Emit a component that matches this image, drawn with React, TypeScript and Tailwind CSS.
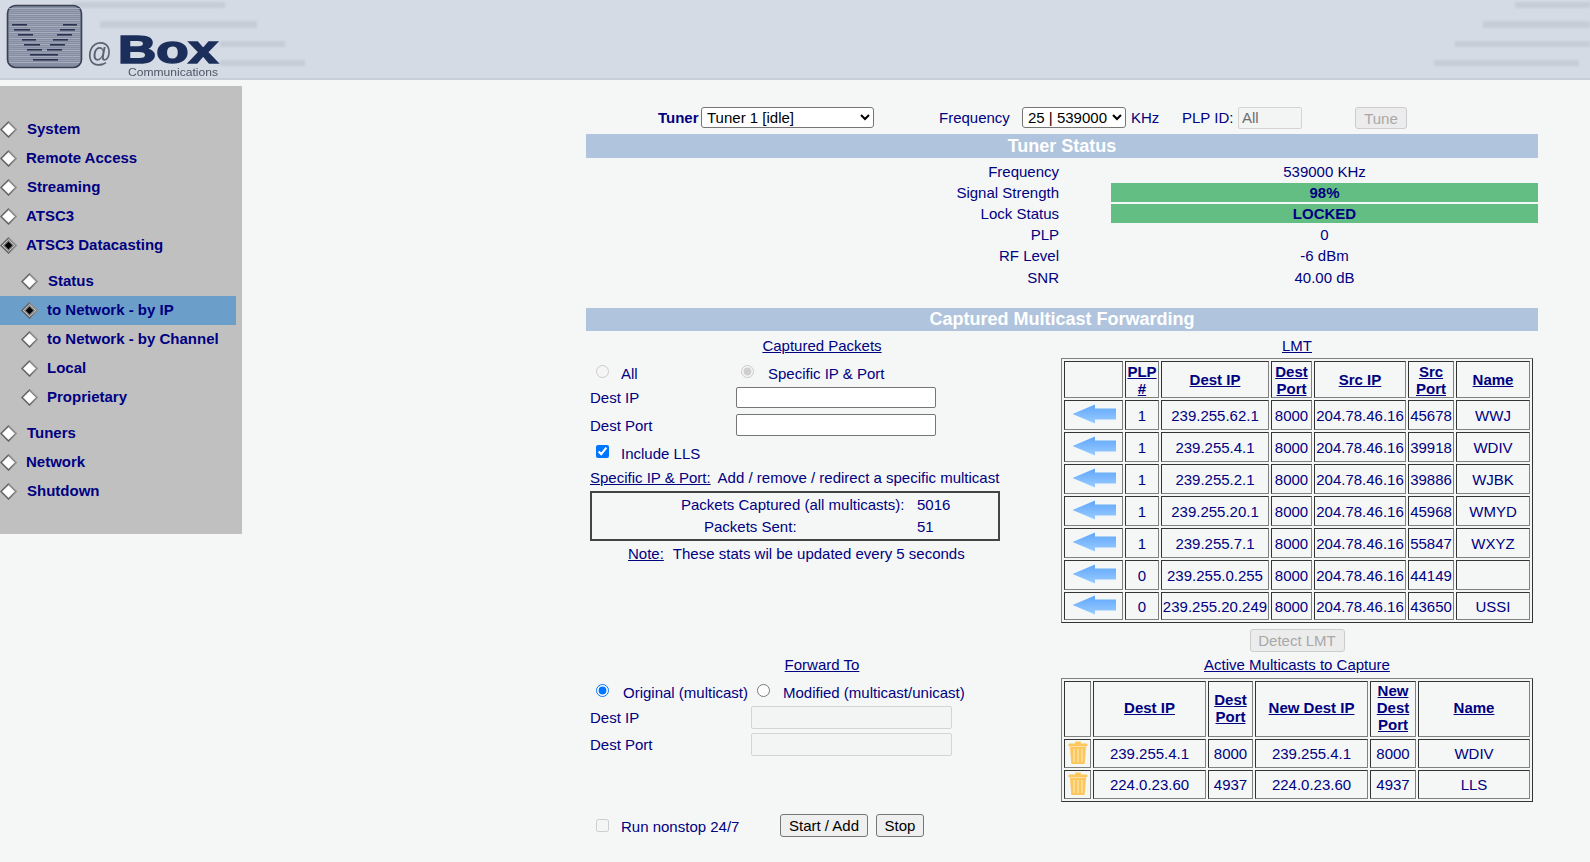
import React from "react";

const Diamond = ({ on = false }: { on?: boolean }) => (
  <svg width="17" height="17" viewBox="0 0 18 18" className="shrink-0">
    <polygon points="9,0 18,9 9,18 0,9" fill="#5f5f5f" />
    <polygon points="9,0 18,9 9,18 16.5,9 9,1.5" fill="#9a9a9a" />
    <polygon points="9,2 16,9 9,16 2,9" fill="#e2e2e2" />
    <polygon points="9,3 15,9 9,15 3,9" fill={on ? "#7a7a7a" : "#ffffff"} />
    {on && <polygon points="9,5 13,9 9,13 5,9" fill="#000000" />}
  </svg>
);

const Arrow = () => (
  <svg width="44" height="20" viewBox="0 0 44 20" className="block mx-auto mb-[2px]">
    <defs>
      <linearGradient id="ag" x1="0" x2="0" y1="0" y2="1">
        <stop offset="0" stopColor="#5ea6fb" />
        <stop offset="1" stopColor="#9accff" />
      </linearGradient>
      <filter id="ab" x="-5%" y="-10%" width="110%" height="120%">
        <feGaussianBlur stdDeviation="0.5" />
      </filter>
    </defs>
    <polygon points="0.5,10 23,0.5 23,4.5 44,4.5 44,15.5 23,15.5 23,19.5" fill="url(#ag)" filter="url(#ab)" />
  </svg>
);

const Trash = () => (
  <svg width="20" height="23" viewBox="0 0 20 23" className="block mx-auto mb-[2px]">
    <rect x="7" y="0.5" width="6" height="2.5" rx="1" fill="#fcc75c" />
    <rect x="0.5" y="2.5" width="19" height="3" rx="1" fill="#fcc75c" />
    <path d="M2 6h16l-1.2 16a1 1 0 0 1-1 1H4.2a1 1 0 0 1-1-1z" fill="#fcc75c" />
    <path d="M6 8v13M10 8v13M14 8v13" stroke="#fde6b0" strokeWidth="1.2" />
  </svg>
);

const stripes: number[][] = [
  [73, 2, 152, 6], [100, 21, 157, 7], [220, 41, 65, 6], [220, 60, 85, 6],
  [1515, 2, 75, 6], [1483, 21, 107, 7], [1455, 41, 135, 6], [1434, 60, 145, 6],
  [0, 79, 15, 1], [1427, 79, 120, 1],
];

const vDashes: number[][] = [
  [12, 24, 15], [63, 24, 14], [14, 29, 16], [60, 29, 15], [18, 34, 15], [57, 34, 15],
  [22, 39, 14], [53, 39, 15], [24, 44, 16], [50, 44, 15], [27, 49, 15], [47, 49, 15],
  [30, 54, 28], [33, 59, 25],
];

const Banner = () => (
  <svg width="1590" height="80" viewBox="0 0 1590 80" className="block">
    <defs>
      <filter id="b1" x="-5%" y="-50%" width="110%" height="200%">
        <feGaussianBlur stdDeviation="0.8" />
      </filter>
      <filter id="b2" x="-5%" y="-5%" width="110%" height="110%">
        <feGaussianBlur stdDeviation="0.4" />
      </filter>
    </defs>
    <rect width="1590" height="80" fill="#d4dbe5" />
    <g filter="url(#b1)" fill="#c6cdd8">
      {stripes.map(([x, y, w, h], i) => (
        <rect key={i} x={x} y={y} width={w} height={h} />
      ))}
    </g>
    <rect y="78" width="1590" height="2" fill="#c8cfd9" />
    <g filter="url(#b2)">
      <rect x="7.5" y="5.5" width="74" height="62" rx="8" fill="#858ea2" stroke="#3a4152" strokeWidth="1.6" />
      {Array.from({ length: 28 }).map((_, i) => (
        <rect key={i} x="9" y={8 + i * 2} width="71" height="0.8" fill={i % 3 === 0 ? "#b0b6c4" : "#9da4b5"} />
      ))}
      {vDashes.map(([x, y, w], i) => (
        <rect key={i} x={x} y={y} width={w} height="1.6" fill="#2a3350" />
      ))}
      <text x="87" y="62" fontFamily="'Liberation Sans', sans-serif" fontSize="27" fill="#5b6272" textLength="25" lengthAdjust="spacingAndGlyphs">@</text>
      <text x="118" y="63" fontFamily="'Liberation Sans', sans-serif" fontWeight="700" fontSize="38" fill="#1f2e5b" stroke="#1f2e5b" strokeWidth="1.6" textLength="100" lengthAdjust="spacingAndGlyphs">Box</text>
      <text x="128" y="76" fontFamily="'Liberation Sans', sans-serif" fontSize="11" fill="#4f5666" textLength="90" lengthAdjust="spacingAndGlyphs">Communications</text>
    </g>
  </svg>
);

const NavItem = ({ label, text, on = false, sub = false, active = false }: { label: string; text: string; on?: boolean; sub?: boolean; active?: boolean }) => (
  <div className={`flex items-center h-[29px] ${active ? "bg-[#6b9ec8] w-[236px]" : ""} ${sub ? "pl-[21px]" : "pl-0"}`}>
    <Diamond on={on} />
    <span className={`font-bold text-[15px] text-[#000080] whitespace-nowrap ${text}`}>{label}</span>
  </div>
);

const Sidebar = () => (
  <aside className="w-[242px] h-[448px] mt-[6px] bg-[#c0c0c0] pt-[29px] shrink-0">
    <NavItem label="System" text="ml-[10px]" />
    <NavItem label="Remote Access" text="ml-[9px]" />
    <NavItem label="Streaming" text="ml-[10px]" />
    <NavItem label="ATSC3" text="ml-[9px]" />
    <NavItem label="ATSC3 Datacasting" text="ml-[9px]" on />
    <div className="h-[7px]" />
    <NavItem label="Status" text="ml-[10px]" sub />
    <NavItem label="to Network - by IP" text="ml-[9px]" sub on active />
    <NavItem label="to Network - by Channel" text="ml-[9px]" sub />
    <NavItem label="Local" text="ml-[9px]" sub />
    <NavItem label="Proprietary" text="ml-[9px]" sub />
    <div className="h-[7px]" />
    <NavItem label="Tuners" text="ml-[10px]" />
    <NavItem label="Network" text="ml-[9px]" />
    <NavItem label="Shutdown" text="ml-[10px]" />
  </aside>
);

const StatusRow = ({ label, value, green = false, last = false }: { label: string; value: string; green?: boolean; last?: boolean }) => (
  <div className={`flex items-center ${last ? "h-[23px]" : "h-[21px]"}`}>
    <div className="w-[473px] text-right mt-[2px]">{label}</div>
    <div className={`ml-[52px] w-[427px] text-center ${green ? "bg-[#62be82] font-bold h-[19px] leading-[19px]" : "mt-[2px]"}`}>{value}</div>
  </div>
);

const Th = ({ children, lift = false }: { children: React.ReactNode; lift?: boolean }) => (
  <th className={`border border-t-[#333333] border-l-[#333333] border-b-[#808080] border-r-[#808080] p-0 text-center font-bold leading-[17px] overflow-hidden ${lift ? "pb-[3px]" : ""}`}>
    <span className="underline">{children}</span>
  </th>
);

const Td = ({ children }: { children?: React.ReactNode }) => (
  <td className="border border-t-[#333333] border-l-[#333333] border-b-[#808080] border-r-[#808080] p-0 text-center leading-[17px] whitespace-nowrap overflow-hidden">
    {children}
  </td>
);

const tableCls = "table-fixed w-[472px] border-separate border-spacing-[2px] border border-t-[#808080] border-l-[#808080] border-b-[#333333] border-r-[#333333]";

const lmt = [
  ["1", "239.255.62.1", "8000", "204.78.46.16", "45678", "WWJ"],
  ["1", "239.255.4.1", "8000", "204.78.46.16", "39918", "WDIV"],
  ["1", "239.255.2.1", "8000", "204.78.46.16", "39886", "WJBK"],
  ["1", "239.255.20.1", "8000", "204.78.46.16", "45968", "WMYD"],
  ["1", "239.255.7.1", "8000", "204.78.46.16", "55847", "WXYZ"],
  ["0", "239.255.0.255", "8000", "204.78.46.16", "44149", ""],
  ["0", "239.255.20.249", "8000", "204.78.46.16", "43650", "USSI"],
];

const active = [
  ["239.255.4.1", "8000", "239.255.4.1", "8000", "WDIV"],
  ["224.0.23.60", "4937", "224.0.23.60", "4937", "LLS"],
];

const LmtTable = () => (
  <table className={tableCls}>
    <colgroup>
      <col className="w-[59px]" /><col className="w-[34px]" /><col className="w-[108px]" /><col className="w-[41px]" /><col className="w-[92px]" /><col className="w-[46px]" /><col className="w-[74px]" />
    </colgroup>
    <thead>
      <tr className="h-[37px]">
        <Td />
        <Th>PLP<br />#</Th>
        <Th>Dest IP</Th>
        <Th>Dest<br />Port</Th>
        <Th>Src IP</Th>
        <Th>Src<br />Port</Th>
        <Th>Name</Th>
      </tr>
    </thead>
    <tbody>
      {lmt.map((r, i) => (
        <tr key={i} className={i === lmt.length - 1 ? "h-[28px]" : "h-[30px]"}>
          <Td><Arrow /></Td>
          {r.map((c, j) => <Td key={j}>{c}</Td>)}
        </tr>
      ))}
    </tbody>
  </table>
);

const ActiveTable = () => (
  <table className={tableCls}>
    <colgroup>
      <col className="w-[27px]" /><col className="w-[113px]" /><col className="w-[45px]" /><col className="w-[113px]" /><col className="w-[46px]" /><col className="w-[112px]" />
    </colgroup>
    <thead>
      <tr className="h-[56px]">
        <Td />
        <Th lift>Dest IP</Th>
        <Th lift>Dest<br />Port</Th>
        <Th lift>New Dest IP</Th>
        <Th lift>New<br />Dest<br />Port</Th>
        <Th lift>Name</Th>
      </tr>
    </thead>
    <tbody>
      {active.map((r, i) => (
        <tr key={i} className="h-[29px]">
          <Td><Trash /></Td>
          {r.map((c, j) => <Td key={j}>{c}</Td>)}
        </tr>
      ))}
    </tbody>
  </table>
);

const fieldCls = "border border-[#767676] rounded-[2px] bg-white";
const offCls = "h-full border border-[#d4d4d4] rounded-[2px] bg-[#f3f4f4]";

const Left = () => (
  <div className="w-[472px] shrink-0">
    <div className="h-[20px] mt-[5px] text-center leading-[20px]"><span className="underline">Captured Packets</span></div>
    <div className="h-[20px] mt-[7px] flex items-center pl-[10px]">
      <input type="radio" disabled name="cap" className="mb-[3px]" />
      <span className="ml-[12px] mt-[2px] w-[120px]">All</span>
      <input type="radio" disabled defaultChecked name="cap" className="mb-[3px]" />
      <span className="ml-[14px] mt-[2px]">Specific IP &amp; Port</span>
    </div>
    <div className="h-[22px] mt-[4px] flex items-start pl-[4px]">
      <span className="w-[146px] leading-[22px]">Dest IP</span>
      <input type="text" className={`w-[200px] h-[21px] ${fieldCls}`} />
    </div>
    <div className="h-[22px] mt-[5px] flex items-center pl-[4px]">
      <span className="w-[146px] mt-[2px]">Dest Port</span>
      <input type="text" className={`w-[200px] h-[22px] ${fieldCls}`} />
    </div>
    <div className="h-[20px] mt-[6px] flex items-center pl-[10px]">
      <input type="checkbox" defaultChecked className="mb-[1px]" />
      <span className="ml-[12px] mt-[4px]">Include LLS</span>
    </div>
    <div className="h-[20px] mt-[6px] flex items-center pl-[4px]">
      <span className="underline">Specific IP &amp; Port:</span>
      <span className="ml-[7px]">Add / remove / redirect a specific multicast</span>
    </div>
    <div className="ml-[4px] mt-[3px] w-[410px] h-[50px] border-2 border-[#444444] flex flex-col justify-center">
      <div className="flex h-[22px] items-center pl-[89px]"><span className="w-[236px]">Packets Captured (all multicasts):</span><span>5016</span></div>
      <div className="flex h-[22px] items-center pl-[112px]"><span className="w-[213px]">Packets Sent:</span><span>51</span></div>
    </div>
    <div className="h-[20px] mt-[3px] flex items-center pl-[42px]">
      <span className="underline">Note:</span>
      <span className="ml-[9px]">These stats wil be updated every 5 seconds</span>
    </div>
    <div className="h-[20px] mt-[91px] text-center leading-[20px]"><span className="underline">Forward To</span></div>
    <div className="h-[20px] mt-[6px] flex items-center pl-[10px]">
      <input type="radio" defaultChecked name="fwd" className="mb-[1px]" />
      <span className="ml-[14px] mt-[4px] w-[134px] whitespace-nowrap">Original (multicast)</span>
      <input type="radio" name="fwd" className="mb-[1px]" />
      <span className="ml-[13px] mt-[4px]">Modified (multicast/unicast)</span>
    </div>
    <div className="h-[23px] mt-[5px] flex items-center pl-[4px]">
      <span className="w-[161px] mt-[2px]">Dest IP</span>
      <input type="text" disabled className={`w-[201px] ${offCls}`} />
    </div>
    <div className="h-[23px] mt-[4px] flex items-center pl-[4px]">
      <span className="w-[161px] mt-[2px]">Dest Port</span>
      <input type="text" disabled className={`w-[201px] ${offCls}`} />
    </div>
    <div className="h-[23px] mt-[58px] flex items-center pl-[10px]">
      <input type="checkbox" disabled />
      <span className="ml-[12px] mt-[4px] w-[159px]">Run nonstop 24/7</span>
      <button className="h-[23px] w-[88px] border border-[#767676] rounded-[3px] bg-[#efefef] text-black">Start / Add</button>
      <button className="h-[23px] w-[48px] ml-[8px] border border-[#767676] rounded-[3px] bg-[#efefef] text-black">Stop</button>
    </div>
  </div>
);

const Right = () => (
  <div className="w-[480px] pl-[3px]">
    <div className="h-[20px] mt-[5px] text-center leading-[20px] w-[472px]"><span className="underline">LMT</span></div>
    <div className="mt-[2px]"><LmtTable /></div>
    <div className="mt-[6px] w-[472px] flex justify-center">
      <button disabled className="h-[23px] w-[95px] border border-[#cccccc] rounded-[3px] bg-[#ececec] text-[#a8a8a8]">Detect LMT</button>
    </div>
    <div className="h-[20px] mt-[3px] text-center leading-[20px] w-[472px]"><span className="underline">Active Multicasts to Capture</span></div>
    <div className="mt-[3px]"><ActiveTable /></div>
  </div>
);

export default function App() {
  return (
    <div className="h-[862px] overflow-hidden bg-[#f5f7f7] font-['Liberation_Sans',Arial,sans-serif] text-[15px] text-[#000080]">
      <Banner />
      <div className="flex">
        <Sidebar />
        <main className="ml-[344px] w-[952px] shrink-0">
          <div className="mt-[27px] h-[22px] flex items-center">
            <span className="ml-[72px] w-[43px] font-bold">Tuner</span>
            <select className="self-start w-[173px] h-[21px] pl-[1px] border border-[#767676] rounded-[3px] bg-white text-black">
              <option>Tuner 1 [idle]</option>
            </select>
            <span className="ml-[65px] w-[83px]">Frequency</span>
            <select className="self-start w-[104px] h-[21px] pl-[1px] border border-[#767676] rounded-[3px] bg-white text-black">
              <option>25 | 539000</option>
            </select>
            <span className="ml-[5px] w-[51px]">KHz</span>
            <span className="w-[56px]">PLP ID:</span>
            <input disabled defaultValue="All" className="w-[64px] h-[22px] px-[3px] border border-[#d4d4d4] rounded-[2px] bg-[#f3f4f4] text-[#6d6d6d]" />
            <button disabled className="self-start ml-[53px] w-[52px] h-[22px] border border-[#cccccc] rounded-[3px] bg-[#ececec] text-[#a8a8a8]">Tune</button>
          </div>
          <div className="mt-[5px] bg-[#b0c4de] text-white font-bold text-[18px] text-center leading-[24px] h-[24px]">Tuner Status</div>
          <div className="mt-[3px]">
            <StatusRow label="Frequency" value="539000 KHz" />
            <StatusRow label="Signal Strength" value="98%" green />
            <StatusRow label="Lock Status" value="LOCKED" green />
            <StatusRow label="PLP" value="0" />
            <StatusRow label="RF Level" value="-6 dBm" />
            <StatusRow label="SNR" value="40.00 dB" last />
          </div>
          <div className="mt-[19px] bg-[#b0c4de] text-white font-bold text-[18px] text-center leading-[23px] h-[23px]">Captured Multicast Forwarding</div>
          <div className="flex">
            <Left />
            <Right />
          </div>
        </main>
      </div>
    </div>
  );
}
